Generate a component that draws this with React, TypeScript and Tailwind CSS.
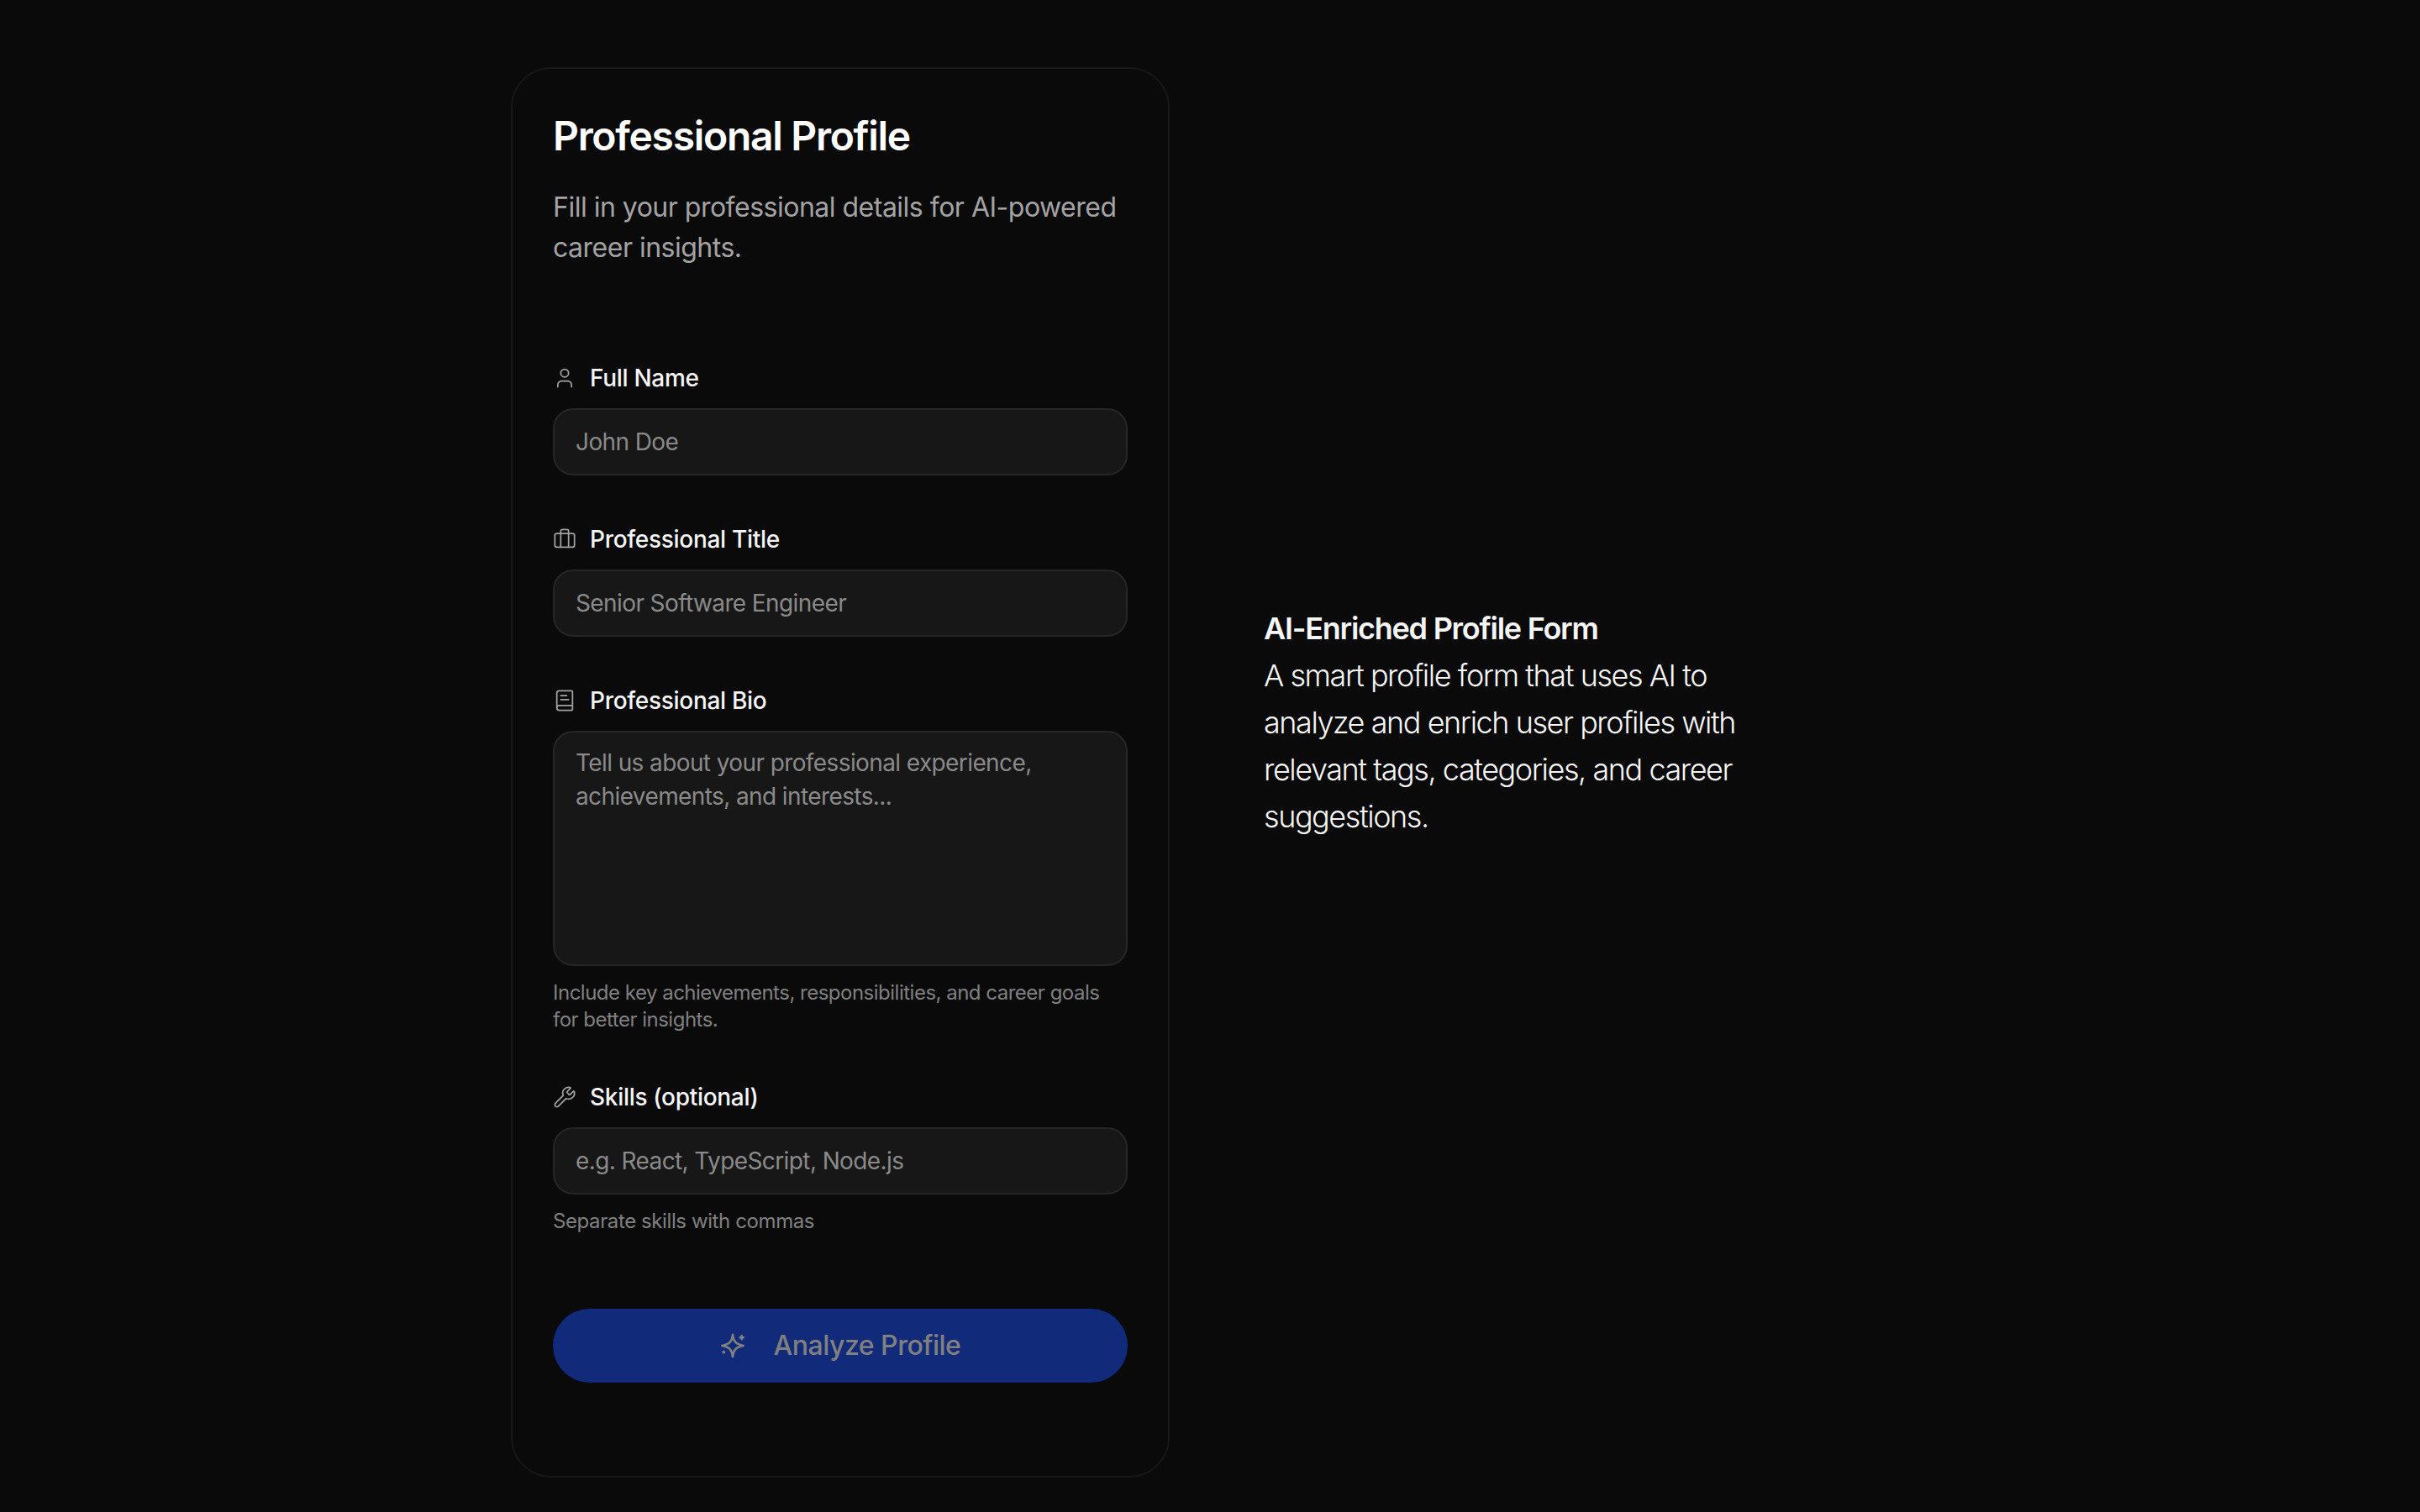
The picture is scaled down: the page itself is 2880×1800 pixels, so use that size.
import { User, Briefcase, BookText, Wrench } from "lucide-react";
import type { ReactNode } from "react";

function Label({ icon, children }: { icon: ReactNode; children: ReactNode }) {
  return (
    <label className="flex items-center gap-4 h-10 mb-4 text-[28px] leading-10 font-medium text-[#f5f5f5] tracking-[-0.3px]">
      <span className="text-[#a3a3a3] shrink-0 w-7 h-7">{icon}</span>
      {children}
    </label>
  );
}

const inputCls =
  "block w-full h-20 px-[25px] rounded-3xl bg-[#171717] border-2 border-[#262626] text-[28px] tracking-[-0.6px] text-white placeholder:text-[#8a8a8a] outline-none";

export default function App() {
  return (
    <div className="w-full h-[1800px] bg-[#0a0a0a] overflow-hidden" style={{ fontFamily: "Inter, 'Noto Sans', sans-serif" }}>
      <div className="h-[1720px] flex items-center gap-28 pl-[608px]">
        <div className="self-start mt-20 w-[784px] h-[1679px] rounded-[48px] border-2 border-[#171717] px-12 pt-[48px] shrink-0">
          <h1 className="text-[48px] leading-[64px] font-semibold text-white tracking-[-1.3px]">Professional Profile</h1>
          <p className="mt-[29px] text-[32px] leading-[48px] text-[#a3a3a3] tracking-[-0.5px]">
            Fill in your professional details for AI-powered career insights.
          </p>
          <div className="mt-[111px]">
            <Label icon={<User size={28} strokeWidth={1.5} />}>Full Name</Label>
            <input className={inputCls} placeholder="John Doe" readOnly />
          </div>
          <div className="mt-14">
            <Label icon={<Briefcase size={28} strokeWidth={1.5} />}>Professional Title</Label>
            <input className={inputCls} placeholder="Senior Software Engineer" readOnly />
          </div>
          <div className="mt-14">
            <Label icon={<BookText size={28} strokeWidth={1.5} />}>Professional Bio</Label>
            <textarea
              className="block w-full h-[280px] px-[25px] py-4 rounded-3xl bg-[#171717] border-2 border-[#262626] text-[28px] leading-10 tracking-[-0.6px] text-white placeholder:text-[#8a8a8a] outline-none resize-none"
              placeholder="Tell us about your professional experience, achievements, and interests..."
              readOnly
            />
            <p className="mt-4 text-2xl leading-8 text-[#808080] tracking-[-0.5px]">
              Include key achievements, responsibilities, and career goals for better insights.
            </p>
          </div>
          <div className="mt-14">
            <Label icon={<Wrench size={28} strokeWidth={1.5} />}>Skills (optional)</Label>
            <input className={inputCls} placeholder="e.g. React, TypeScript, Node.js" readOnly />
            <p className="mt-4 text-2xl leading-8 text-[#808080] tracking-[-0.4px]">Separate skills with commas</p>
          </div>
          <button className="mt-[88px] w-full h-[88px] rounded-full bg-[#112a7a] text-[#808080] flex items-center justify-center gap-8 text-[32px] font-medium tracking-[-0.5px]">
            <svg width="32" height="32" viewBox="0 0 24 24" fill="none" stroke="currentColor" strokeWidth="2" strokeLinecap="round" strokeLinejoin="round">
              <path d="M11.250 2.200C12 8.500 14 10.600 20.800 12C14 13.400 12 15.500 11.250 21.800C10.500 15.500 8.500 13.400 1.700 12C8.500 10.600 10.500 8.500 11.250 2.200Z" />
              <path d="M19.300 3.200v3M17.800 4.700h3" />
              <path d="M3.200 17.800h.01" strokeWidth="2.800" />
            </svg>
            Analyze Profile
          </button>
        </div>
        <div className="w-[767px] shrink-0">
          <div className="w-[576px] text-[36px] leading-[56px] text-[#f5f5f5]">
            <div className="font-semibold tracking-[-1.25px]">AI-Enriched Profile Form</div>
            <div className="font-light tracking-[-1.45px]">A smart profile form that uses AI to analyze and enrich user profiles with relevant tags, categories, and career suggestions.</div>
          </div>
        </div>
      </div>
    </div>
  );
}
